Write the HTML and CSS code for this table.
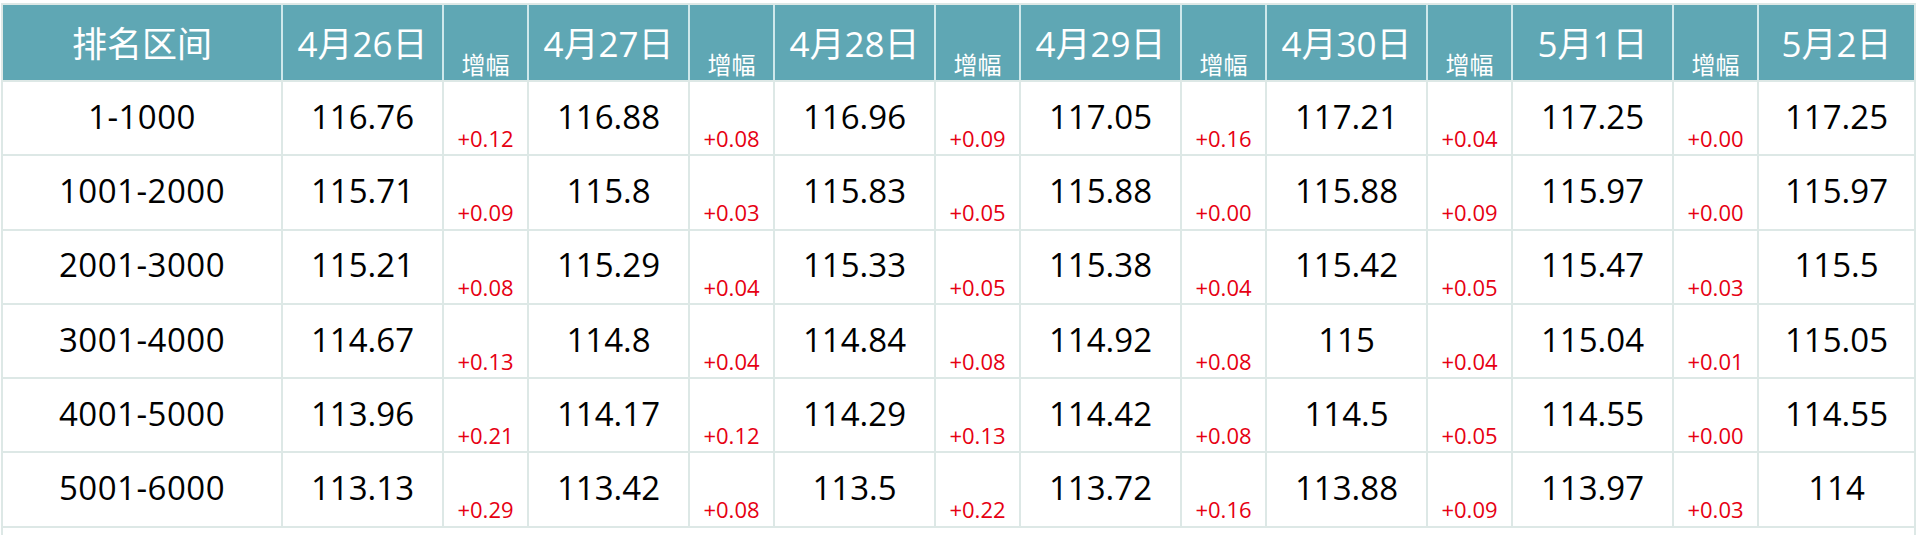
FILE: index.html
```html
<!DOCTYPE html>
<html lang="zh-CN">
<head>
<meta charset="utf-8">
<title>排名区间</title>
<link rel="stylesheet" href="styles.css">
</head>
<body>
<div class="table">
  <div class="row head">
    <div class="cell h-main">排名区间</div>
    <div class="cell h-date">4月26日</div><div class="cell h-inc">增幅</div>
    <div class="cell h-date">4月27日</div><div class="cell h-inc">增幅</div>
    <div class="cell h-date">4月28日</div><div class="cell h-inc">增幅</div>
    <div class="cell h-date">4月29日</div><div class="cell h-inc">增幅</div>
    <div class="cell h-date">4月30日</div><div class="cell h-inc">增幅</div>
    <div class="cell h-date">5月1日</div><div class="cell h-inc">增幅</div>
    <div class="cell h-date">5月2日</div>
  </div>
  <div class="row body">
    <div class="cell val range">1-1000</div>
    <div class="cell val">116.76</div><div class="cell inc">+0.12</div>
    <div class="cell val">116.88</div><div class="cell inc">+0.08</div>
    <div class="cell val">116.96</div><div class="cell inc">+0.09</div>
    <div class="cell val">117.05</div><div class="cell inc">+0.16</div>
    <div class="cell val">117.21</div><div class="cell inc">+0.04</div>
    <div class="cell val">117.25</div><div class="cell inc">+0.00</div>
    <div class="cell val">117.25</div>
  </div>
  <div class="row body">
    <div class="cell val range">1001-2000</div>
    <div class="cell val">115.71</div><div class="cell inc">+0.09</div>
    <div class="cell val">115.8</div><div class="cell inc">+0.03</div>
    <div class="cell val">115.83</div><div class="cell inc">+0.05</div>
    <div class="cell val">115.88</div><div class="cell inc">+0.00</div>
    <div class="cell val">115.88</div><div class="cell inc">+0.09</div>
    <div class="cell val">115.97</div><div class="cell inc">+0.00</div>
    <div class="cell val">115.97</div>
  </div>
  <div class="row body">
    <div class="cell val range">2001-3000</div>
    <div class="cell val">115.21</div><div class="cell inc">+0.08</div>
    <div class="cell val">115.29</div><div class="cell inc">+0.04</div>
    <div class="cell val">115.33</div><div class="cell inc">+0.05</div>
    <div class="cell val">115.38</div><div class="cell inc">+0.04</div>
    <div class="cell val">115.42</div><div class="cell inc">+0.05</div>
    <div class="cell val">115.47</div><div class="cell inc">+0.03</div>
    <div class="cell val">115.5</div>
  </div>
  <div class="row body">
    <div class="cell val range">3001-4000</div>
    <div class="cell val">114.67</div><div class="cell inc">+0.13</div>
    <div class="cell val">114.8</div><div class="cell inc">+0.04</div>
    <div class="cell val">114.84</div><div class="cell inc">+0.08</div>
    <div class="cell val">114.92</div><div class="cell inc">+0.08</div>
    <div class="cell val">115</div><div class="cell inc">+0.04</div>
    <div class="cell val">115.04</div><div class="cell inc">+0.01</div>
    <div class="cell val">115.05</div>
  </div>
  <div class="row body">
    <div class="cell val range">4001-5000</div>
    <div class="cell val">113.96</div><div class="cell inc">+0.21</div>
    <div class="cell val">114.17</div><div class="cell inc">+0.12</div>
    <div class="cell val">114.29</div><div class="cell inc">+0.13</div>
    <div class="cell val">114.42</div><div class="cell inc">+0.08</div>
    <div class="cell val">114.5</div><div class="cell inc">+0.05</div>
    <div class="cell val">114.55</div><div class="cell inc">+0.00</div>
    <div class="cell val">114.55</div>
  </div>
  <div class="row body">
    <div class="cell val range">5001-6000</div>
    <div class="cell val">113.13</div><div class="cell inc">+0.29</div>
    <div class="cell val">113.42</div><div class="cell inc">+0.08</div>
    <div class="cell val">113.5</div><div class="cell inc">+0.22</div>
    <div class="cell val">113.72</div><div class="cell inc">+0.16</div>
    <div class="cell val">113.88</div><div class="cell inc">+0.09</div>
    <div class="cell val">113.97</div><div class="cell inc">+0.03</div>
    <div class="cell val">114</div>
  </div>
  <div class="row note">
    <div class="cell note-cell"></div>
  </div>
</div>
</body>
</html>
```

FILE: styles.css
```css
html, body {
  margin: 0;
  padding: 0;
  overflow: hidden;
  background: #ffffff;
}

body {
  font-family: "Open Sans", "Noto Sans CJK SC", sans-serif;
}

.table {
  display: grid;
  row-gap: 2px;
  width: max-content;
  margin: 3px 0 0 1px;
  padding: 2px;
  background: #dde8e6;
}

.row {
  display: grid;
  grid-template-columns: 278px repeat(6, 159px 83px) 155px;
  column-gap: 2px;
}

.head {
  height: 75px;
  background: #cfe8eb;
}

.body {
  height: 72.3px;
}

.cell {
  display: flex;
  align-items: center;
  justify-content: center;
  white-space: nowrap;
}

.head .cell {
  background: #5fa7b4;
  color: #ffffff;
}

.h-main,
.h-date {
  font-size: 35px;
  padding-bottom: 2px;
}

.h-inc {
  align-items: flex-end;
  font-size: 24px;
  padding-bottom: 0;
  line-height: 1.2;
}

.body .cell {
  background: #ffffff;
}

.val {
  color: #000000;
  font-size: 33px;
  padding-bottom: 4px;
}

.range {
  letter-spacing: 0.5px;
}

.inc {
  align-items: flex-end;
  color: #e60012;
  font-size: 22px;
  line-height: 1.2;
  padding-bottom: 3px;
}

.note {
  grid-template-columns: 1fr;
  height: 40px;
}

.note-cell {
  background: #ffffff;
}
```
